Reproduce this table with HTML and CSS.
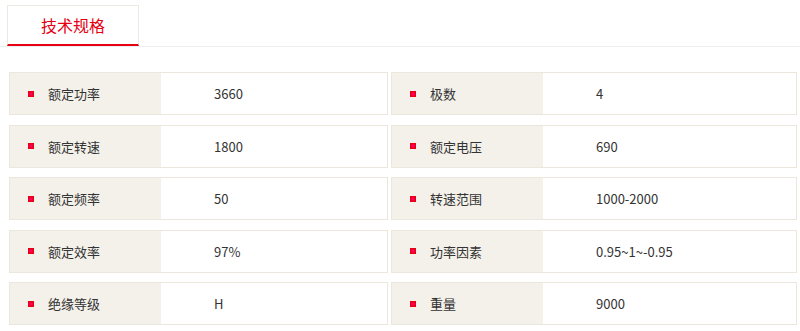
FILE: index.html
```html
<!DOCTYPE html>
<html lang="zh-CN">
<head>
<meta charset="utf-8">
<title>技术规格</title>
<link rel="stylesheet" href="styles.css">
</head>
<body>
<div class="tabs">
  <div class="tab">技术规格</div>
</div>
<div class="spec">
  <div class="row"><div class="label"><i class="dot"></i>额定功率</div><div class="value">3660</div></div>
  <div class="row"><div class="label"><i class="dot"></i>极数</div><div class="value">4</div></div>
  <div class="row"><div class="label"><i class="dot"></i>额定转速</div><div class="value">1800</div></div>
  <div class="row"><div class="label"><i class="dot"></i>额定电压</div><div class="value">690</div></div>
  <div class="row"><div class="label"><i class="dot"></i>额定频率</div><div class="value">50</div></div>
  <div class="row"><div class="label"><i class="dot"></i>转速范围</div><div class="value">1000-2000</div></div>
  <div class="row"><div class="label"><i class="dot"></i>额定效率</div><div class="value">97%</div></div>
  <div class="row"><div class="label"><i class="dot"></i>功率因素</div><div class="value">0.95~1~-0.95</div></div>
  <div class="row"><div class="label"><i class="dot"></i>绝缘等级</div><div class="value">H</div></div>
  <div class="row"><div class="label"><i class="dot"></i>重量</div><div class="value">9000</div></div>
</div>
</body>
</html>
```

FILE: styles.css
```css
* { box-sizing: border-box; }
body {
  margin: 0;
  background: #fff;
  font-family: "Noto Sans CJK SC", "Noto Sans", sans-serif;
  color: #333;
}
.tabs {
  padding: 5px 0 0 7px;
  border-bottom: 1px solid #eeeeee;
}
.tab {
  width: 132px;
  height: 41px;
  border: 1px solid #ece9e0;
  border-bottom: 2px solid #e60012;
  color: #e60012;
  font-size: 16px;
  text-align: center;
  line-height: 38px;
}
.spec {
  display: grid;
  grid-template-columns: 379px 406px;
  column-gap: 3px;
  row-gap: 9.5px;
  padding: 25px 0 0 9px;
}
.row {
  display: flex;
  height: 43px;
  border: 1px solid #ebe7dd;
  font-size: 13px;
}
.label {
  width: 151px;
  background: #f3f1ea;
  display: flex;
  align-items: center;
  padding-left: 18px;
}
.dot {
  width: 6px;
  height: 6px;
  background: #e60012;
  margin-right: 14px;
  box-shadow: inset 0 0 0 1.5px #e60012, inset 0 0 0 3px #f06;
}
.value {
  flex: 1;
  display: flex;
  align-items: center;
  padding-left: 53px;
}
```
